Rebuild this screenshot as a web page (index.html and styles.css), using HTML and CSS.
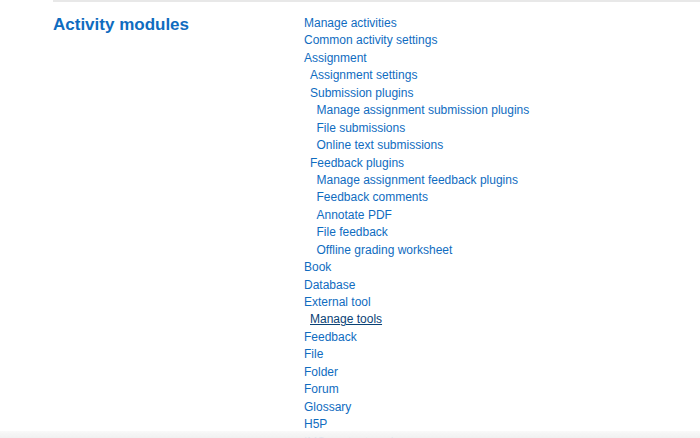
FILE: index.html
```html
<!DOCTYPE html>
<html lang="en">
<head>
<meta charset="UTF-8" />
<title>Activity modules</title>
<link rel="stylesheet" href="styles.css">
</head>
<body>

<div class="page">
  <section class="admin-row">
    <h2 class="row-title">Activity modules</h2>
    <ul class="tree">
      <li><a href="#">Manage activities</a></li>
      <li><a href="#">Common activity settings</a></li>
      <li><a href="#">Assignment</a></li>
      <li class="lvl2"><a href="#">Assignment settings</a></li>
      <li class="lvl2"><a href="#">Submission plugins</a></li>
      <li class="lvl3"><a href="#">Manage assignment submission plugins</a></li>
      <li class="lvl3"><a href="#">File submissions</a></li>
      <li class="lvl3"><a href="#">Online text submissions</a></li>
      <li class="lvl2"><a href="#">Feedback plugins</a></li>
      <li class="lvl3"><a href="#">Manage assignment feedback plugins</a></li>
      <li class="lvl3"><a href="#">Feedback comments</a></li>
      <li class="lvl3"><a href="#">Annotate PDF</a></li>
      <li class="lvl3"><a href="#">File feedback</a></li>
      <li class="lvl3"><a href="#">Offline grading worksheet</a></li>
      <li><a href="#">Book</a></li>
      <li><a href="#">Database</a></li>
      <li><a href="#">External tool</a></li>
      <li class="lvl2"><a href="#" class="hover">Manage tools</a></li>
      <li><a href="#">Feedback</a></li>
      <li><a href="#">File</a></li>
      <li><a href="#">Folder</a></li>
      <li><a href="#">Forum</a></li>
      <li><a href="#">Glossary</a></li>
      <li><a href="#">H5P</a></li>
      <li><a href="#">IMS content package</a></li>
    </ul>
  </section>
</div>

<div class="footer-fade"></div>

</body>
</html>
```

FILE: styles.css
```css
body {
  margin: 0;
  font-family: "Liberation Sans", Arial, sans-serif;
  background: #fff;
  color: #1d2125;
  overflow: hidden;
}

.page {
  margin-left: 53px;
  border-top: 2px solid #e8e8e8;
}

.admin-row {
  display: grid;
  grid-template-columns: 251px 1fr;
  padding-top: 13px;
}

.row-title {
  margin: 0;
  font-size: 17px;
  font-weight: 700;
  color: #0f6cbf;
  line-height: 20px;
}

.tree {
  list-style: none;
  margin: 0;
  padding: 0;
  font-size: 12px;
  line-height: 17.43px;
}
.tree a {
  color: #0f6cbf;
  text-decoration: none;
}
.tree a.hover {
  color: #0a4275;
  text-decoration: underline;
}
.tree .lvl2 { padding-left: 6px; }
.tree .lvl3 { padding-left: 12.5px; }

.footer-fade {
  position: fixed;
  left: 0;
  right: 0;
  bottom: 0;
  height: 7px;
  background: linear-gradient(to bottom, rgba(245,245,245,0.6), rgba(240,240,240,0.95));
}
```
